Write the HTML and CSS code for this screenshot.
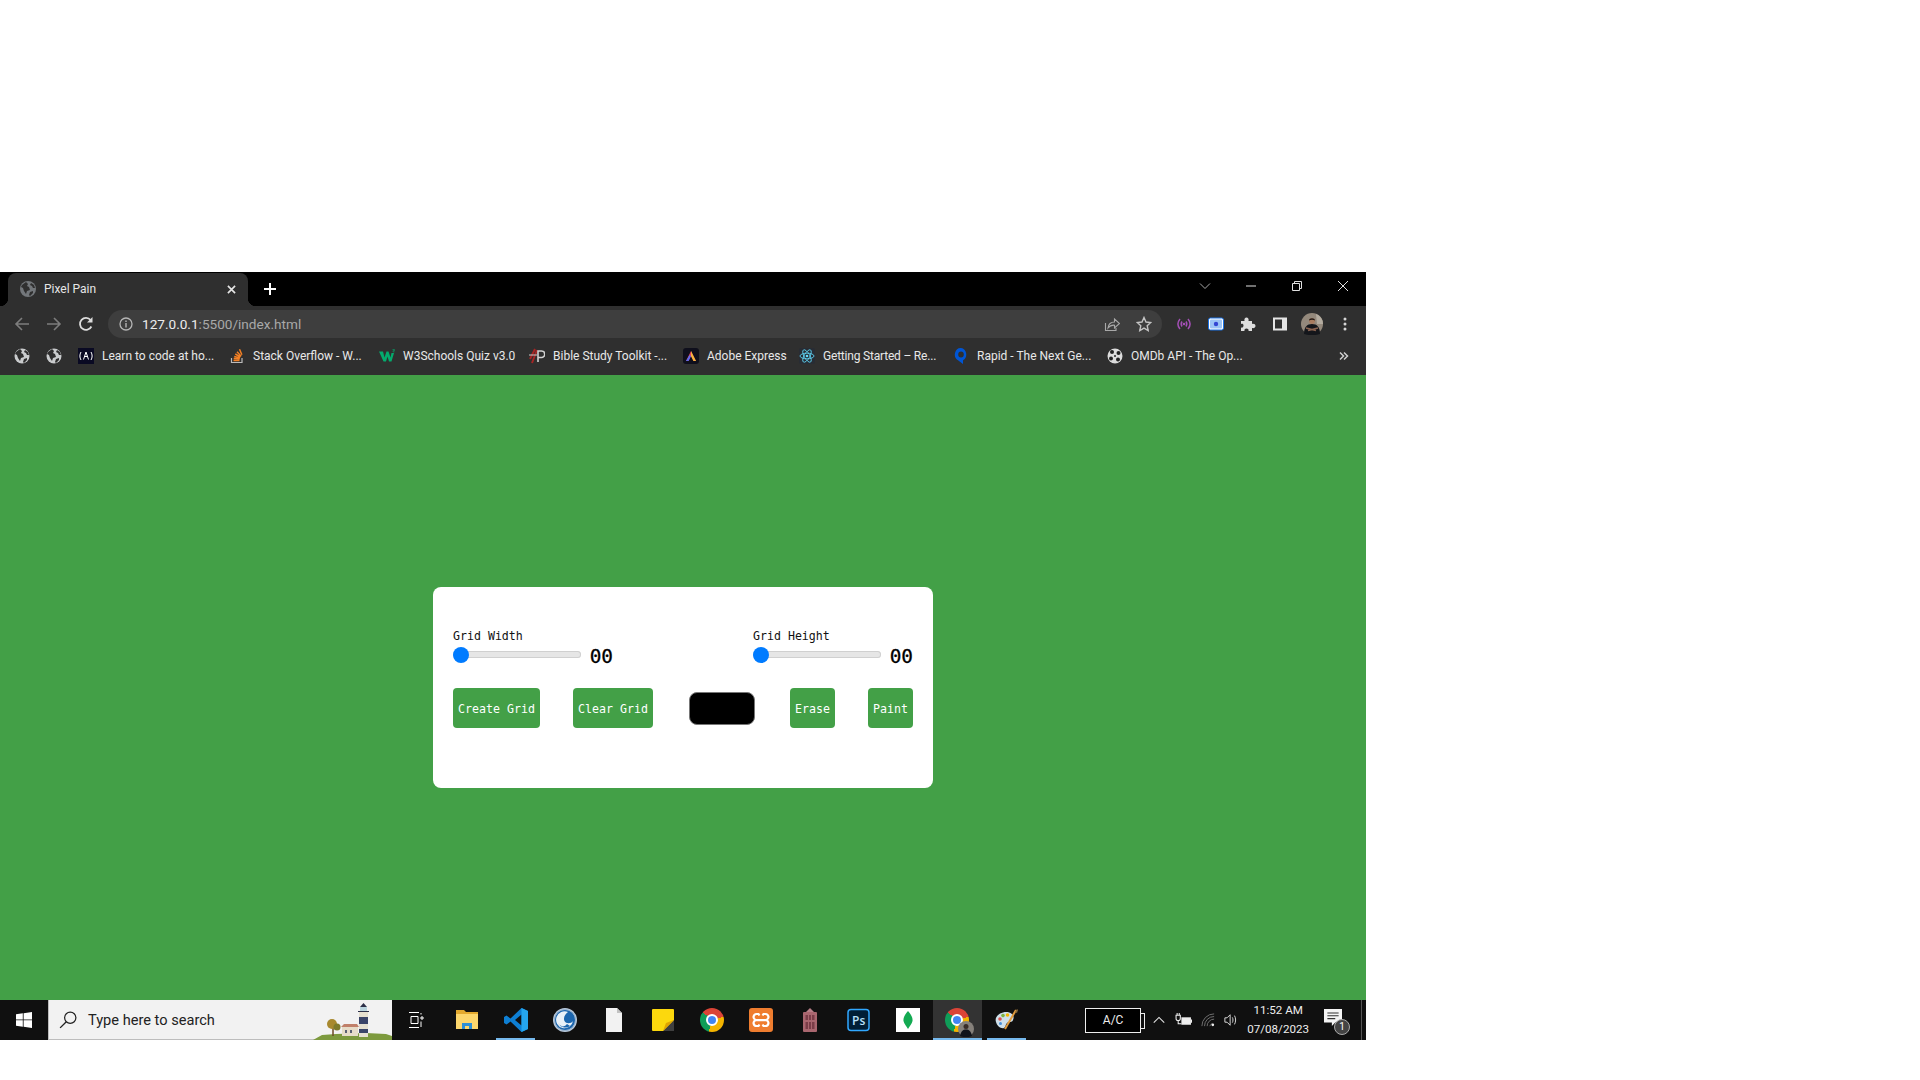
FILE: index.html
```html
<!doctype html>
<html>
<head>
    <meta charset="utf-8">
    <title>Pixel Pain</title>
    <link rel="stylesheet" href="styles.css">
</head>

<body>

<div class="window">

    <div class="tabstrip">
        <div class="tab">
            <svg class="tab-globe" viewBox="0 0 16 16"><circle cx="8" cy="8" r="8" fill="#73777b"/><path d="M2 4l4-3 2 2-1 2 2 1 1 3-3 1-1 3-2-3-1-3-2-1zM11 2l3 2 1 3-2 0-1-2-2-1zM10 11l3-1 0 2-3 3-1-1z" fill="#2f2f2f"/></svg>
            <span class="tab-title">Pixel Pain</span>
            <svg class="tab-close" viewBox="0 0 10 10"><path d="M1 1l8 8M9 1l-8 8" stroke="#e6e6e6" stroke-width="1.8"/></svg>
        </div>
        <svg class="new-tab" viewBox="0 0 12 12"><path d="M6 0v12M0 6h12" stroke="#fff" stroke-width="2"/></svg>
        <div class="window-controls">
            <svg viewBox="0 0 12 12"><path d="M1 3.500l5 5 5-5" fill="none" stroke="#a8a8a8"/></svg>
            <svg viewBox="0 0 12 12"><path d="M1 6h10" stroke="#e0e0e0"/></svg>
            <svg viewBox="0 0 12 12"><path d="M1.500 3.500h7v7h-7zM3.500 3.500v-2h7v7h-2" fill="none" stroke="#e0e0e0"/></svg>
            <svg viewBox="0 0 12 12"><path d="M1 1l10 10M11 1l-10 10" stroke="#e0e0e0"/></svg>
        </div>
    </div>

    <div class="toolbar">
        <svg class="nav-icon" viewBox="0 0 16 16"><path d="M15 8H2M8 2L2 8l6 6" fill="none" stroke="#7d7d7d" stroke-width="1.6"/></svg>
        <svg class="nav-icon" viewBox="0 0 16 16"><path d="M1 8h13M8 2l6 6-6 6" fill="none" stroke="#7d7d7d" stroke-width="1.6"/></svg>
        <svg class="nav-icon" viewBox="0 0 16 16"><path d="M13.400 10.500A6 6 0 1 1 12.600 4" fill="none" stroke="#dcdcdc" stroke-width="1.8"/><path d="M14.500 1v5.500H9z" fill="#dcdcdc"/></svg>
        <div class="omnibox">
            <svg class="info-icon" viewBox="0 0 14 14"><circle cx="7" cy="7" r="6" fill="none" stroke="#b5b5b5" stroke-width="1.3"/><path d="M7 6v4.500M7 3.400v1.500" stroke="#b5b5b5" stroke-width="1.4"/></svg>
            <span class="url"><span class="url-host">127.0.0.1</span>:5500/index.html</span>
            <svg class="omni-action" viewBox="0 0 16 16"><path d="M1.500 7v7.500h10.500V12" fill="none" stroke="#a8a8a8" stroke-width="1.100"/><path d="M4 12c.5-4 3-6 6.500-6V3l5 4.500-5 4.500V9.200C8 9 5.500 10 4 12z" fill="none" stroke="#a8a8a8" stroke-width="1.100"/></svg>
            <svg class="omni-action" viewBox="0 0 16 16"><path d="M8 1.500l2 4.500 4.800.5-3.600 3.200 1 4.800L8 12.100l-4.200 2.400 1-4.800L1.200 6.500 6 6z" fill="none" stroke="#c4c4c4" stroke-width="1.400"/></svg>
        </div>
        <div class="extensions">
            <svg viewBox="0 0 16 16"><g fill="none" stroke="#a34fb5" stroke-width="1.500"><path d="M4 3C1.500 6 1.500 10 4 13M12 3c2.500 3 2.500 7 0 10"/><path d="M6 5.500c-1 1.500-1 3.500 0 5M10 5.500c1 1.500 1 3.500 0 5"/></g><circle cx="8" cy="8" r="1.300" fill="#a34fb5"/></svg>
            <svg viewBox="0 0 16 16"><rect x=".5" y="2" width="15" height="12" rx="2" fill="#fff"/><rect x="2" y="3.500" width="12" height="9" rx="1" fill="#9cc4f5"/><rect x=".5" y="2" width="15" height="12" rx="2" fill="none" stroke="#1a73e8"/><circle cx="8" cy="8" r="2.200" fill="#3346d3"/></svg>
            <svg viewBox="0 0 16 16"><path d="M1 5h3.500c-.5-2 .5-3.500 2-3.500S9 3 8.500 5H12v3c2-.5 3.500.5 3.500 2S14 12.500 12 12v3H8.500c.5-1.500-.5-2.500-2-2.500S4 13.500 4.500 15H1v-3.500c1.500.5 2.500-.5 2.500-2S2.500 7.500 1 8z" fill="#dedede"/></svg>
            <svg viewBox="0 0 16 16"><path d="M1 1.500h14v13H1zM3 3.500v9h7v-9z" fill="#e4e4e4" fill-rule="evenodd"/></svg>
            <svg class="avatar" viewBox="0 0 22 22"><circle cx="11" cy="11" r="11" fill="#94897c"/><path d="M15 1a11 11 0 0 1 7 10h-6z" fill="#b4aca0"/><path d="M3 21c0-7 3-10 8-10s8 3 8 10l-4 1H7z" fill="#14161b"/><circle cx="11" cy="8" r="3" fill="#a87c60"/><path d="M8 7.500c0-3 6-3 6 0-2-1-4-1-6 0z" fill="#221a16"/><path d="M5 15l10 2.500M17 15L7 17.500" stroke="#8a6350" stroke-width="1.800"/></svg>
            <svg class="dots" viewBox="0 0 16 16"><circle cx="8" cy="3" r="1.500" fill="#d6d6d6"/><circle cx="8" cy="8" r="1.500" fill="#d6d6d6"/><circle cx="8" cy="13" r="1.500" fill="#d6d6d6"/></svg>
        </div>
    </div>

    <div class="bookmarks">
        <svg class="bm-globe" viewBox="0 0 16 16"><circle cx="8" cy="8" r="7.500" fill="#c9cbcd"/><path d="M2 4l4-3 2 2-1 2 2 1 1 3-3 1-1 3-2-3-1-3-2-1zM11 2l3 2 1 3-2 0-1-2-2-1zM10 11l3-1 0 2-3 3-1-1z" fill="#2e2e2e"/></svg>
        <svg class="bm-globe" viewBox="0 0 16 16"><circle cx="8" cy="8" r="7.500" fill="#c9cbcd"/><path d="M2 4l4-3 2 2-1 2 2 1 1 3-3 1-1 3-2-3-1-3-2-1zM11 2l3 2 1 3-2 0-1-2-2-1zM10 11l3-1 0 2-3 3-1-1z" fill="#2e2e2e"/></svg>
        <div class="bm bm-first">
            <svg viewBox="0 0 16 16"><rect width="16" height="16" fill="#0a0a23"/><path d="M3 4C1.500 6.500 1.500 9.500 3 12M13 4c1.500 2.500 1.500 5.500 0 8" fill="none" stroke="#fff"/><path d="M8 4l-2.500 7.500M8 4l2.500 7.500M6.800 8.500h2.400" stroke="#fff" fill="none"/></svg>
            <span>Learn to code at ho...</span>
        </div>
        <div class="bm">
            <svg viewBox="0 0 16 16"><path d="M2.500 10v4.500h10.500V10" fill="none" stroke="#bcbbbb" stroke-width="1.200"/><path d="M4.500 12.500h6M4.700 10.500l6 .6M5.200 8.400l5.800 1.500M6.300 6l5.200 3M8 3.800l4.200 4.400M10.500 1.300l2.400 5.500" stroke="#f48024" stroke-width="1.500"/></svg>
            <span>Stack Overflow - W...</span>
        </div>
        <div class="bm">
            <svg viewBox="0 0 16 16"><path d="M0 3.500h4l1.500 6 2-6h2l2 6 1-4.500h2.500L12.500 13.500h-2.500L8.500 8.500l-1.500 5H4.500z" fill="#04aa6d"/><path d="M13.500 1.500h2v1.200h-1.500v1.200h1.500" fill="none" stroke="#04aa6d" stroke-width=".6"/></svg>
            <span>W3Schools Quiz v3.0</span>
        </div>
        <div class="bm bm-wide">
            <svg viewBox="0 0 16 16"><path d="M1 11L6 1M3 15L8 2" stroke="#a52525" stroke-width="2"/><path d="M9 14V3h3.500a3 3 0 0 1 0 6.500H9" fill="none" stroke="#d2d2d2" stroke-width="1.600"/><path d="M0 7h8" stroke="#c9c9c9"/></svg>
            <span>Bible Study Toolkit -...</span>
        </div>
        <div class="bm bm-short">
            <svg viewBox="0 0 16 16"><rect width="16" height="16" rx="3" fill="#0f0f1c"/><path d="M8 3L3 13h2.500L8 8l2.500 5H13z" fill="#e8405e"/><path d="M8 3l5 10h-2.500L8 8z" fill="#f6b73c"/><path d="M5.500 13L8 8 6.500 7 3 13z" fill="#5a6cf0"/></svg>
            <span>Adobe Express</span>
        </div>
        <div class="bm bm-wide">
            <svg viewBox="0 0 16 16"><rect width="16" height="16" rx="2" fill="#282c34"/><g fill="none" stroke="#61dafb" stroke-width=".8"><ellipse cx="8" cy="8" rx="7" ry="2.800"/><ellipse cx="8" cy="8" rx="7" ry="2.800" transform="rotate(60 8 8)"/><ellipse cx="8" cy="8" rx="7" ry="2.800" transform="rotate(120 8 8)"/></g><circle cx="8" cy="8" r="1.300" fill="#61dafb"/></svg>
            <span class="bm-tight">Getting Started – Re...</span>
        </div>
        <div class="bm bm-wide">
            <svg viewBox="0 0 16 16"><path d="M8 0a6 6.500 0 0 0-3 12.200L10 16v-3.800A6 6.500 0 0 0 8 0zm0 3.500a2.800 3 0 1 1 0 6 2.800 3 0 0 1 0-6z" fill="#0055d4"/></svg>
            <span>Rapid - The Next Ge...</span>
        </div>
        <div class="bm">
            <svg viewBox="0 0 16 16"><circle cx="8" cy="8" r="7.500" fill="#dcdcdc"/><circle cx="5" cy="4" r="2" fill="#222"/><circle cx="11.500" cy="5" r="2" fill="#222"/><circle cx="4" cy="10.500" r="2" fill="#222"/><circle cx="11" cy="11.500" r="2" fill="#222"/><circle cx="8" cy="8" r="1" fill="#222"/></svg>
            <span>OMDb API - The Op...</span>
        </div>
        <svg class="bm-more" viewBox="0 0 10 10"><path d="M1 1.500L4.500 5 1 8.500M5 1.500L8.500 5 5 8.500" fill="none" stroke="#cfcfcf" stroke-width="1.500"/></svg>
    </div>

    <main class="page">
        <section class="card">
            <div class="sliders">
                <div class="slider-group">
                    <label class="slider-label">Grid Width</label>
                    <div class="slider-row">
                        <input class="slider" type="range" min="0" max="50" value="0">
                        <span class="slider-value">00</span>
                    </div>
                </div>
                <div class="slider-group">
                    <label class="slider-label">Grid Height</label>
                    <div class="slider-row">
                        <input class="slider" type="range" min="0" max="50" value="0">
                        <span class="slider-value">00</span>
                    </div>
                </div>
            </div>
            <div class="actions">
                <button class="btn btn-create">Create Grid</button>
                <button class="btn btn-clear">Clear Grid</button>
                <button class="swatch" aria-label="Colour"></button>
                <button class="btn btn-small">Erase</button>
                <button class="btn btn-small">Paint</button>
            </div>
        </section>
    </main>

    <div class="taskbar">
        <div class="start">
            <svg viewBox="0 0 16 16"><path d="M0 2.300L6.800 1.300V7.500H0zM7.600 1.200L16 0V7.500H7.600zM0 8.300H6.800V14.700L0 13.700zM7.600 8.300H16V16L7.600 14.800z" fill="#fff"/></svg>
        </div>
        <div class="search">
            <svg class="search-icon" viewBox="0 0 16 16"><circle cx="10" cy="6" r="5" fill="none" stroke="#222" stroke-width="1.100"/><path d="M6.500 9.500L1 15" stroke="#222" stroke-width="1.200"/></svg>
            <span class="search-text">Type here to search</span>
            <svg class="search-art" viewBox="0 0 80 40">
                <path d="M1 40l9-5 14-1 30-1 20 1 6 2v4z" fill="#7d9a3e"/>
                <path d="M21 36V27" stroke="#6b4a26" stroke-width="1.500"/>
                <circle cx="20" cy="24" r="5" fill="#a8892f"/>
                <circle cx="25" cy="27" r="3.500" fill="#7e7a2c"/>
                <path d="M29 27l3-3h13l2 3z" fill="#c0806a"/>
                <rect x="30" y="27" width="16" height="9" fill="#e6dcc8"/>
                <path d="M33 30h2v3h-2zM38 30h2v3h-2z" fill="#5a6072"/>
                <rect x="47" y="11" width="9" height="26" fill="#e6e0d0"/>
                <path d="M47 17h9v7h-9zM47 29h9v4h-9z" fill="#3a4468"/>
                <rect x="48" y="7" width="7" height="4" fill="#bcd6e0"/>
                <path d="M46 11h11v1H46zM48 7l3.500-4L55 7z" fill="#2c3048"/>
            </svg>
        </div>
        <div class="task-view">
            <svg viewBox="0 0 16 16"><path d="M1 .5h10M1 15.500h10M3 4.500h7v7H3z" fill="none" stroke="#fff"/><path d="M13 1v1.500M13 5h2v2h-2zM13 9.500V15" stroke="#fff" fill="none"/></svg>
        </div>
        <div class="task-icons">
            <div class="task-icon">
                <svg viewBox="0 0 24 24"><path d="M1 2h8l2 2h12v17H1z" fill="#e3a92e"/><path d="M1 6h22v15H1z" fill="#fcd66c"/><path d="M7 21v-6h10v6h-3v-3h-4v3z" fill="#2d8fd5"/></svg>
            </div>
            <div class="task-icon task-open">
                <svg viewBox="0 0 24 24"><path d="M17.500 0L24 3v18l-6.500 3-11-10.500L2.500 16.500 0 15V9l2.500-1.500 4 3zM17.500 6.500L11 12l6.500 5.500z" fill="#0e7fd3"/><path d="M17.500 0L24 3v18l-6.500 3z" fill="#25a5ee"/></svg>
            </div>
            <div class="task-icon">
                <svg viewBox="0 0 24 24"><circle cx="12" cy="12" r="12" fill="#b8c9dc"/><circle cx="12" cy="12" r="10.500" fill="#1c66ae"/><path d="M15 4a8.500 8.500 0 1 0 5 9c-2 3-7 3-8.500 0S12 6 15 4z" fill="#e9f1f8"/><circle cx="12" cy="12" r="10.500" fill="none" stroke="#9eb6ce"/><path d="M5 15a8 8 0 0 0 12 3l-3-2a5 5 0 0 1-9-1z" fill="#1c66ae"/></svg>
            </div>
            <div class="task-icon">
                <svg viewBox="0 0 24 24"><path d="M4 0h11l5 5v19H4z" fill="#f2f2f2"/><path d="M15 0v5h5z" fill="#c2c2c2"/></svg>
            </div>
            <div class="task-icon">
                <svg viewBox="0 0 24 24"><rect x="1" y="1" width="22" height="22" rx="1" fill="#fcd80d"/><path d="M12 23L23 12v11z" fill="#3f3f3f"/><path d="M12 23l3-8 8-3-11 11z" fill="#e0a400"/></svg>
            </div>
            <div class="task-icon">
                <div class="chrome"></div>
            </div>
            <div class="task-icon">
                <svg viewBox="0 0 24 24"><rect width="24" height="24" rx="3" fill="#ef7d2f"/><path d="M10.500 7.500L9.500 6H7.500a3 3 0 0 0-1 5.800M10.500 16.500L9.500 18H7.500a3 3 0 0 1-1-5.800h11a3 3 0 0 1-1 5.800h-2l-1-1.500M13.500 7.500L14.500 6h2a3 3 0 0 1 1 5.800" fill="none" stroke="#fff" stroke-width="2.200"/></svg>
            </div>
            <div class="task-icon">
                <svg viewBox="0 0 24 24"><path d="M8 4l4-4 4 4z" fill="#b87f88"/><rect x="5" y="4" width="14" height="20" rx="1" fill="#a9666f"/><path d="M7.500 7h2.500v5H7.500zM11 7h2v5h-2zM14 7h2.500v5H14zM7.500 14h2.500v7H7.500zM11 14h2v7h-2zM14 14h2.500v7H14z" fill="#7a3d48"/></svg>
            </div>
            <div class="task-icon">
                <svg viewBox="0 0 24 24"><rect x="1" y="1.500" width="21" height="21" rx="3" fill="#001e36" stroke="#31a8ff" stroke-width="1.500"/><text class="ps-text" x="5" y="17" fill="#b9e1fb">Ps</text></svg>
            </div>
            <div class="task-icon">
                <svg viewBox="0 0 24 24"><rect width="24" height="24" fill="#fff"/><path d="M12 3c3 3 5 7 4.500 10-.5 3-3 5-4.500 8-1.500-3-4-5-4.500-8C7 10 9 6 12 3z" fill="#13aa52"/></svg>
            </div>
            <div class="task-icon task-active task-open">
                <div class="chrome"></div>
                <svg class="chrome-badge" viewBox="0 0 16 16"><circle cx="8" cy="8" r="8" fill="#86817b"/><circle cx="8" cy="5.500" r="2.500" fill="#3a2e28"/><path d="M2 15c1-5 3-6.500 6-6.500s5 1.500 6 6.500l-3 1H5z" fill="#10131a"/></svg>
            </div>
            <div class="task-icon task-open">
                <svg viewBox="0 0 24 24"><path d="M1 14C-1 8 6 4 11 4c6 0 9 4 7 8-1 3-4 1-6 3s-1 4-3 5c-3 1-7-2-8-6z" fill="#cfe0ea"/><circle cx="5" cy="11" r="1.800" fill="#d9534f"/><circle cx="8" cy="7.500" r="1.800" fill="#7cb342"/><circle cx="12.500" cy="7" r="1.800" fill="#f4b400"/><circle cx="5.500" cy="15.500" r="1.500" fill="#4a90d9"/><path d="M10 21L21 2" stroke="#e09a3c" stroke-width="2"/><path d="M20 4l2-3 1 1-1 3z" fill="#8a6a3a"/></svg>
            </div>
        </div>
        <div class="tray">
            <div class="battery-meter">
                <span class="battery-label">A/C</span>
            </div>
            <svg class="tray-icon tray-caret" viewBox="0 0 16 16"><path d="M2 11l6-6 6 6" fill="none" stroke="#e6e6e6" stroke-width="1.200"/></svg>
            <svg class="tray-icon tray-plug" viewBox="0 0 16 16"><path d="M1 3v3a2 2 0 0 0 4 0V3zM2 3V1M4 3V1M3 8v3h3" fill="none" stroke="#eee"/><rect x="6" y="5" width="9" height="7" fill="#eee"/><path d="M15 7h1v3h-1z" fill="#eee"/></svg>
            <svg class="tray-icon tray-wifi" viewBox="0 0 16 16"><path d="M1 15A14 14 0 0 1 15 1M4 15A11 11 0 0 1 15 4M7 15a8 8 0 0 1 8-8" fill="none" stroke="#7c7c7c"/><path d="M10 15a5 5 0 0 1 3-3" fill="none" stroke="#7c7c7c"/><circle cx="13.500" cy="13.500" r="1.500" fill="#eee"/></svg>
            <svg class="tray-icon tray-volume" viewBox="0 0 16 16"><path d="M1 5.500h2.500L7 2v12l-3.500-3.500H1z" fill="none" stroke="#eee"/><path d="M9.500 5c1 1.800 1 4.200 0 6M12 3c1.700 3 1.700 7 0 10" fill="none" stroke="#eee"/></svg>
            <div class="clock">
                <span>11:52 AM</span>
                <span>07/08/2023</span>
            </div>
            <div class="notify">
                <svg viewBox="0 0 16 16"><path d="M0 0h16v12h-6l-3 3v-3H0z" fill="#f4f4f4"/><path d="M3 3.500h10M3 6h10M3 8.500h7" stroke="#333"/></svg>
                <span class="notify-badge">1</span>
            </div>
            <div class="show-desktop"></div>
        </div>
    </div>

</div>

</body>

</html>
```

FILE: styles.css
```css
body {
    margin: 0;
    padding-top: 272px;
    background: #fff;
    font-family: Roboto, 'Liberation Sans', sans-serif;
}

.window {
    display: flex;
    flex-direction: column;
    width: 1366px;
    height: 768px;
    overflow: hidden;
}

/* chrome */
.tabstrip {
    display: flex;
    align-items: center;
    flex: none;
    height: 34px;
    background: #000;
}

.tab {
    display: flex;
    align-items: center;
    position: relative;
    align-self: flex-end;
    box-sizing: border-box;
    width: 240px;
    height: 33px;
    margin-left: 8px;
    padding: 0 12px 1px;
    background: #2f2f2f;
    border-radius: 8px 8px 0 0;
    color: #e6e6e6;
    font-size: 12px;
}

.tab::before,
.tab::after {
    content: "";
    position: absolute;
    bottom: 0;
    width: 8px;
    height: 8px;
}

.tab::before {
    left: -8px;
    background: radial-gradient(circle at 0 0, #000 8px, #2f2f2f 8.5px);
}

.tab::after {
    right: -8px;
    background: radial-gradient(circle at 100% 0, #000 8px, #2f2f2f 8.5px);
}

.tab-globe {
    width: 16px;
    height: 16px;
    margin-right: 8px;
}

.tab-title {
    flex: 1;
}

.tab-close {
    width: 9px;
    height: 9px;
    margin-right: 0;
}

.new-tab {
    width: 12px;
    height: 12px;
    margin-left: 16px;
}

.window-controls {
    display: flex;
    margin-left: auto;
    margin-right: 17px;
    margin-top: -7px;
    gap: 34px;
}

.window-controls svg {
    width: 12px;
    height: 12px;
}

.toolbar {
    display: flex;
    align-items: center;
    flex: none;
    box-sizing: border-box;
    height: 36px;
    padding: 4px 0 4px 14px;
    background: #2f2f2f;
}

.nav-icon {
    width: 16px;
    height: 16px;
    margin-right: 16px;
}

.omnibox {
    display: flex;
    align-items: center;
    box-sizing: border-box;
    width: 1054px;
    height: 28px;
    margin-left: -2px;
    padding: 0 10px 0 11px;
    background: #3e3e3e;
    border-radius: 14px;
    color: #a9a9a9;
    font-size: 13.6px;
}

.info-icon {
    width: 14px;
    height: 14px;
    margin-right: 9px;
}

.url {
    flex: 1;
}

.url-host {
    color: #ececec;
}

.omni-action {
    width: 16px;
    height: 16px;
    margin-left: 16px;
}

.extensions {
    display: flex;
    align-items: center;
    margin-left: 14px;
    gap: 16px;
}

.extensions svg {
    width: 16px;
    height: 16px;
}

.extensions .avatar {
    width: 22px;
    height: 22px;
    margin: 0 -3px;
}

.extensions .dots {
    margin-left: 1px;
}

.bookmarks {
    display: flex;
    align-items: center;
    flex: none;
    box-sizing: border-box;
    height: 33px;
    padding: 0 0 5px 14px;
    background: #2f2f2f;
    color: #e8e8e8;
    font-size: 12px;
}

.bm-globe {
    width: 16px;
    height: 16px;
    margin-right: 16px;
}

.bm {
    display: flex;
    align-items: center;
    flex: none;
    width: 150px;
    gap: 8px;
    white-space: nowrap;
}

.bm-first {
    width: 151px;
}

.bm-wide {
    width: 154px;
}

.bm-short {
    width: 116px;
}

.bm-tight {
    letter-spacing: -0.2px;
}

.bm svg {
    flex: none;
    width: 16px;
    height: 16px;
}

.bm-more {
    width: 10px;
    height: 10px;
    margin-left: auto;
    margin-right: 17px;
}

/* the page itself */
.page {
    display: flex;
    flex: 1;
    align-items: center;
    justify-content: center;
    background: #43a047;
}

.card {
    box-sizing: border-box;
    width: 500px;
    height: 201px;
    padding: 41px 20px 0;
    background: #fff;
    border-radius: 8px;
    font-family: 'DejaVu Sans Mono', 'Liberation Mono', monospace;
}

.sliders {
    display: flex;
    justify-content: space-between;
}

.slider-group {
    width: 160px;
}

.slider-label {
    display: block;
    color: #111;
    font-size: 11.6px;
    line-height: 16px;
}

.slider-row {
    display: flex;
    align-items: flex-start;
    justify-content: space-between;
}

.slider {
    -webkit-appearance: none;
    appearance: none;
    width: 128px;
    height: 7px;
    margin: 7px 0 0;
    background: #e6e6e6;
    box-shadow: inset 0 0 0 1px #d0d0d0;
    border-radius: 4px;
}

.slider::-webkit-slider-thumb {
    -webkit-appearance: none;
    width: 16px;
    height: 16px;
    background: #007bff;
    border-radius: 50%;
}

.slider-value {
    color: #000;
    font-size: 19.4px;
    line-height: 22px;
    margin-top: 2px;
    -webkit-text-stroke: 0.3px #000;
}

.actions {
    display: flex;
    align-items: center;
    margin-top: 20px;
    gap: 33px;
}

.btn {
    height: 40px;
    padding: 1px 0 0;
    background: #43a047;
    border: none;
    border-radius: 4px;
    color: #fff;
    font-family: inherit;
    font-size: 11.6px;
}

.btn-create {
    width: 87px;
}

.btn-clear {
    width: 80px;
}

.btn-small {
    width: 45px;
}

.swatch {
    width: 66px;
    height: 33px;
    margin: 0 2px 0 3px;
    padding: 0;
    background: #000;
    border: 1px solid #777;
    border-radius: 8px;
}

/* windows taskbar */
.taskbar {
    display: flex;
    align-items: stretch;
    flex: none;
    height: 40px;
    background: #101010;
}

.start {
    display: flex;
    align-items: center;
    justify-content: center;
    width: 48px;
}

.start svg {
    width: 16px;
    height: 16px;
}

.search {
    display: flex;
    align-items: center;
    position: relative;
    box-sizing: border-box;
    width: 344px;
    padding-left: 10px;
    background: #f2f2f2;
    border-bottom: 1px solid #bdbdbd;
    border-left: 1px solid #bdbdbd;
    color: #222;
    font-size: 14.6px;
}

.search-icon {
    width: 18px;
    height: 18px;
    margin-right: 11px;
}

.search-art {
    position: absolute;
    right: 0;
    bottom: -1px;
    width: 80px;
    height: 40px;
}

.task-view {
    display: flex;
    align-items: center;
    justify-content: center;
    width: 48px;
}

.task-view svg {
    width: 16px;
    height: 16px;
}

.task-icons {
    display: flex;
    margin-left: 2px;
}

.task-icon {
    display: flex;
    align-items: center;
    justify-content: center;
    position: relative;
    box-sizing: border-box;
    width: 49.1px;
    padding-bottom: 1px;
}

.task-icon svg {
    width: 24px;
    height: 24px;
}

.task-open::after {
    content: "";
    position: absolute;
    left: 5px;
    right: 5px;
    bottom: 0;
    height: 2px;
    background: #76b9ed;
}

.task-active {
    background: #333;
}

.task-active::after {
    left: 0;
    right: 0;
}

.ps-text {
    font-family: 'Open Sans', sans-serif;
    font-size: 12px;
    font-weight: 600;
}

.chrome {
    position: relative;
    width: 24px;
    height: 24px;
    background: conic-gradient(from 310deg, #db4437 0 125deg, #f4b400 125deg 245deg, #0f9d58 245deg 360deg);
    border-radius: 50%;
}

.chrome::after {
    content: "";
    position: absolute;
    top: 6px;
    left: 6px;
    width: 8px;
    height: 8px;
    background: #4285f4;
    border: 2px solid #fff;
    border-radius: 50%;
}

.task-icon .chrome-badge {
    position: absolute;
    right: 8px;
    bottom: 3px;
    width: 16px;
    height: 16px;
}

.tray {
    display: flex;
    align-items: center;
    flex: 1;
    color: #ededed;
}

.battery-meter {
    display: flex;
    align-items: center;
    justify-content: center;
    position: relative;
    box-sizing: border-box;
    width: 56px;
    height: 25px;
    margin-left: 54px;
    background: #000;
    border: 1px solid #eee;
    font-size: 12px;
}

.battery-meter::after {
    content: "";
    position: absolute;
    right: -5px;
    top: 4px;
    width: 3px;
    height: 14px;
    border: 1px solid #eee;
    border-left: none;
}

.tray-icon {
    flex: none;
    width: 14px;
    height: 14px;
}

.tray-caret {
    margin-left: 11px;
}

.tray-plug {
    width: 17px;
    height: 17px;
    margin-left: 9px;
}

.tray-wifi {
    margin-left: 9px;
}

.tray-volume {
    margin-left: 9px;
}

.clock {
    display: flex;
    flex-direction: column;
    align-items: center;
    width: 70px;
    margin-left: 5px;
    font-size: 11.6px;
    line-height: 19px;
}

.notify {
    position: relative;
    width: 18px;
    height: 18px;
    margin-left: 11px;
    margin-top: -5px;
}

.notify svg {
    display: block;
    width: 18px;
    height: 18px;
}

.notify-badge {
    position: absolute;
    right: -8px;
    bottom: -8px;
    width: 14px;
    height: 14px;
    background: #444;
    border: 1px solid #aaa;
    border-radius: 50%;
    color: #fff;
    font-size: 10px;
    line-height: 14px;
    text-align: center;
}

.show-desktop {
    width: 1px;
    height: 40px;
    margin-left: auto;
    margin-right: 4px;
    background: #555;
}
```
